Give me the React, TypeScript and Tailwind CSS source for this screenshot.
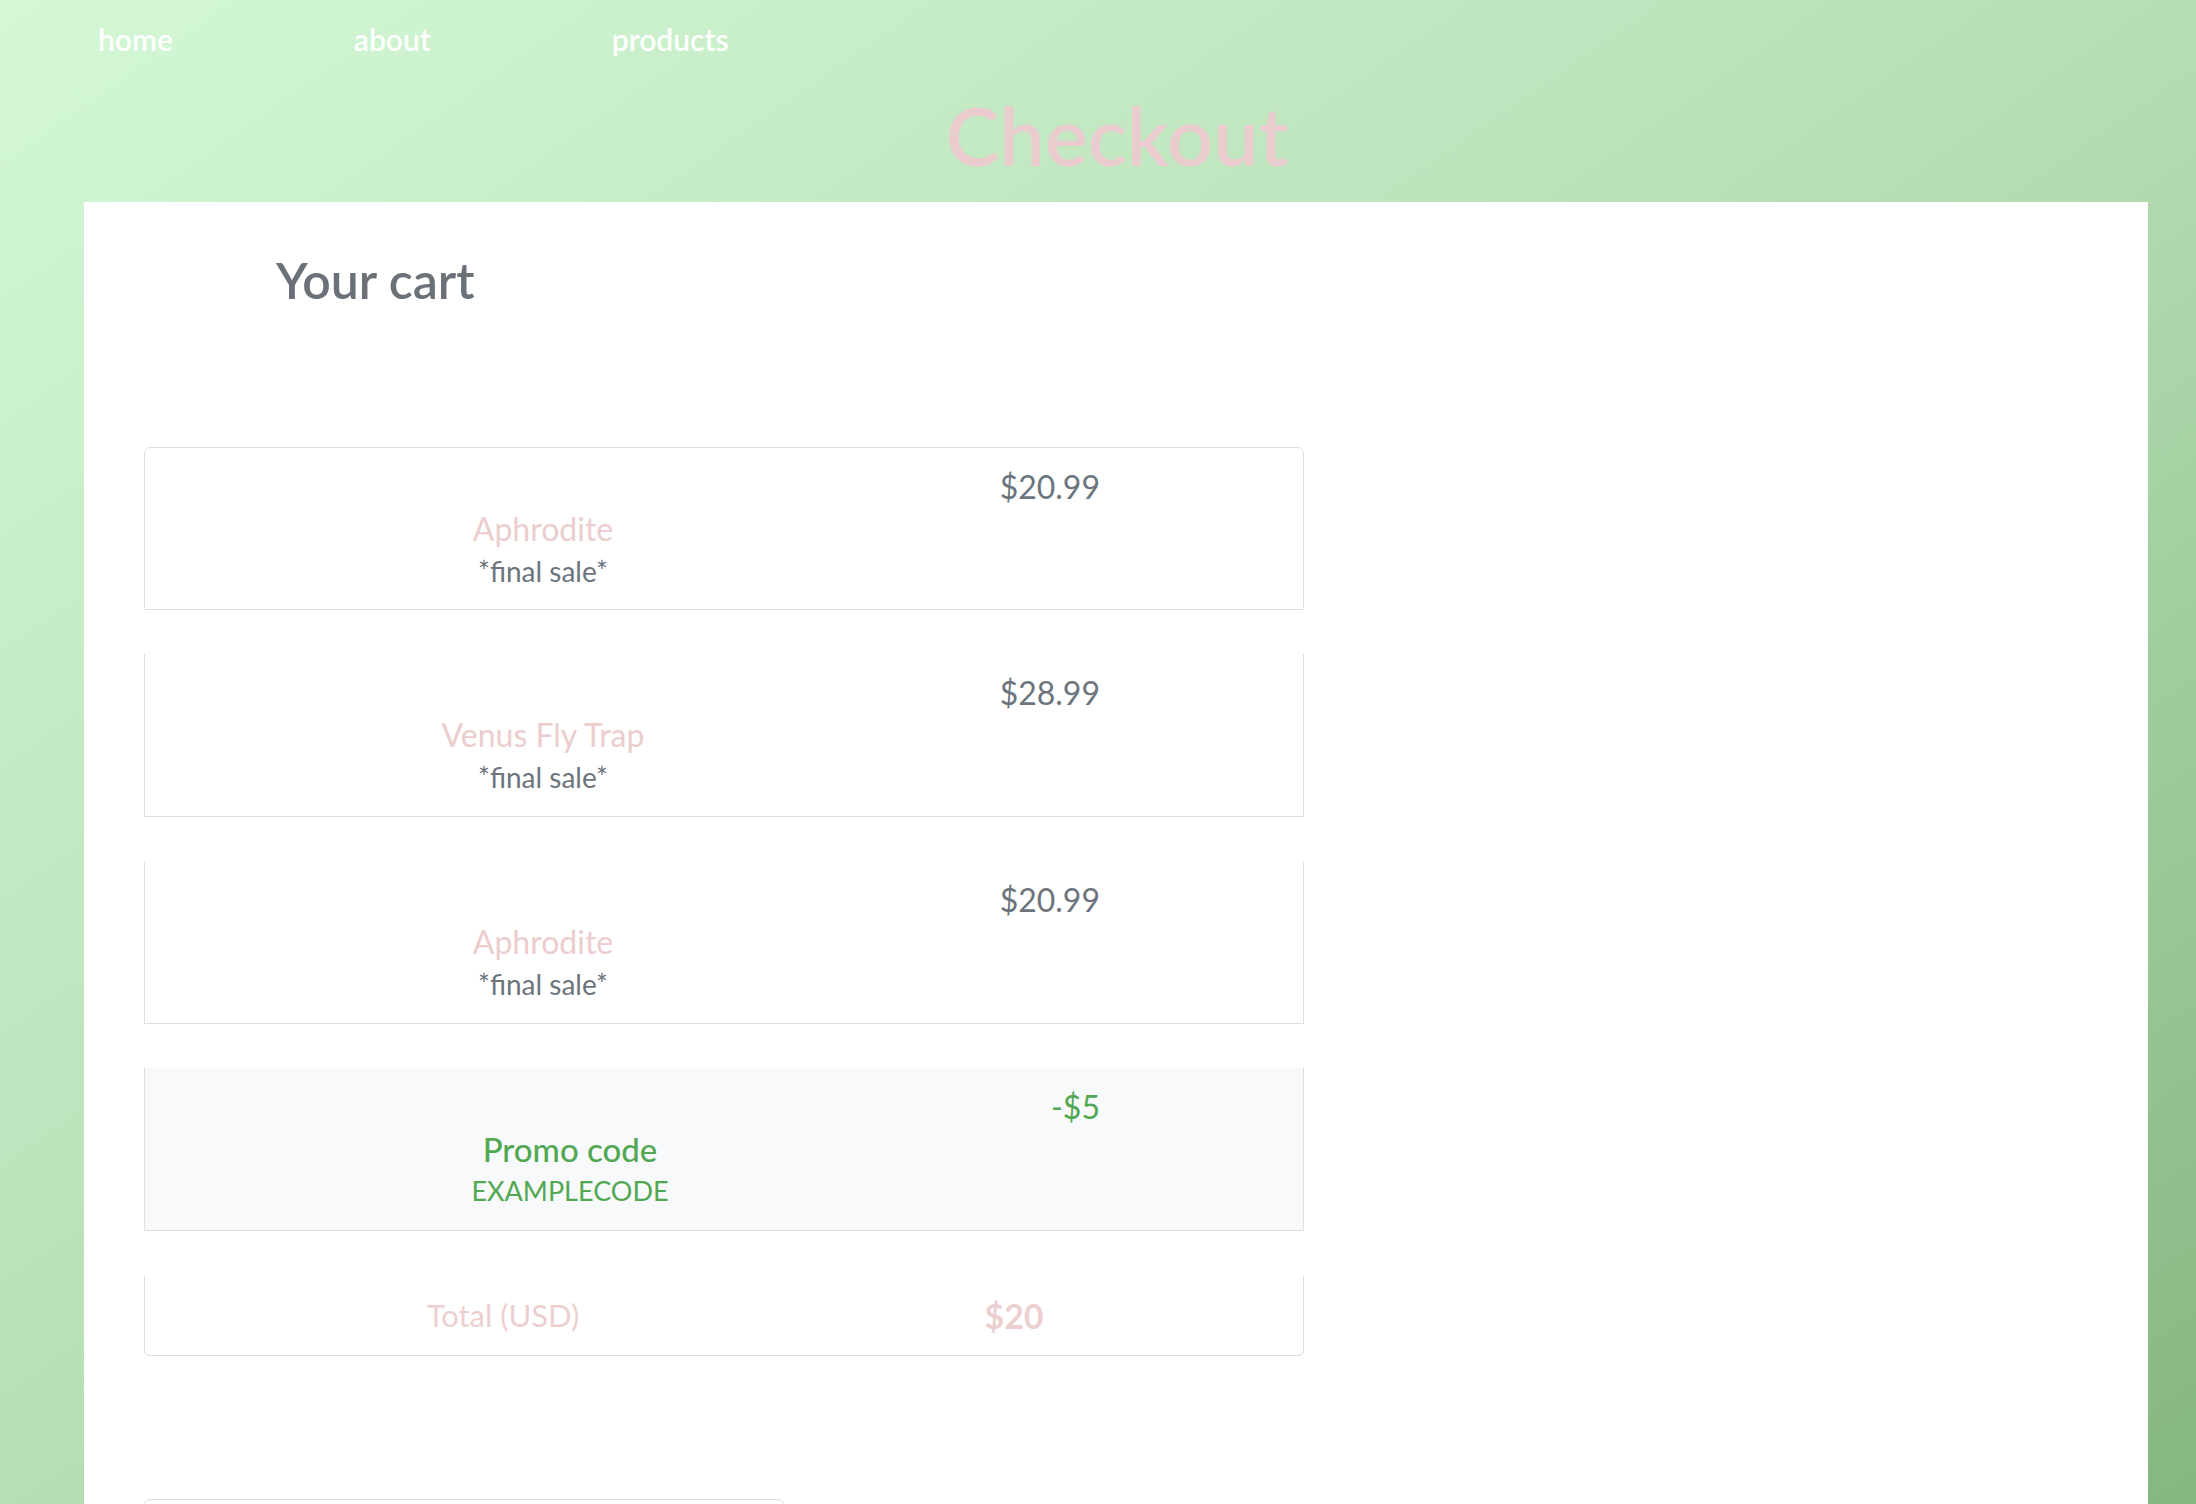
import React from 'react';

interface CartItem {
  name: string;
  price: string;
}

const items: CartItem[] = [
  { name: 'Aphrodite', price: '$20.99' },
  { name: 'Venus Fly Trap', price: '$28.99' },
  { name: 'Aphrodite', price: '$20.99' },
];

const ItemRow: React.FC<{ item: CartItem; first: boolean }> = ({ item, first }) => {
  return (
    <li
      className={
        first
          ? 'flex h-[163px] border border-[#dedede] rounded-t-[6px] pt-[18px] leading-[42px]'
          : 'mt-[44px] flex h-[163px] border-x border-b border-[#dedede] pt-[18px] leading-[42px]'
      }
    >
      <div className="w-[796px] pt-[42px] text-center">
        <h6 className="text-[32px] text-[#ebcdcd]">{item.name}</h6>
        <small className="text-[28px] text-[#6c757d]">*final sale*</small>
      </div>
      <span className="flex-1 pr-[203px] text-right text-[32px] text-[#6c757d]">{item.price}</span>
    </li>
  );
};

const App: React.FC = () => {
  return (
    <div className="min-h-[1504px] overflow-hidden bg-gradient-to-br from-[#d4f8d6] via-[#b6deb4] to-[#84b680] font-['Lato',sans-serif]">
      <nav className="flex gap-[181px] pl-[98px] pt-[18px] text-[30px] font-semibold leading-[42px] text-white">
        <a href="#">home</a>
        <a href="#">about</a>
        <a href="#">products</a>
      </nav>

      <h1 className="pl-[38px] pt-[8px] text-center text-[81px] font-semibold leading-[134px] text-[#eacccf]">
        Checkout
      </h1>

      <main className="ml-[84px] mr-[48px] min-h-[1302px] bg-white px-[60px] pt-[48px]">
        <h2 className="pl-[132px] text-[50px] font-semibold leading-[60px] text-[#6b7179]">Your cart</h2>

        <ul className="mt-[137px] w-[1160px]">
          {items.map((item, i) => (
            <ItemRow key={i} item={item} first={i === 0} />
          ))}
          <li className="mt-[44px] flex h-[163px] border-x border-b border-[#dedede] bg-[#f8f9fa] pt-[18px] leading-[42px] text-[#52a852]">
            <div className="w-[850px] pt-[42px] text-center">
              <h6 className="text-[33px] font-medium">Promo code</h6>
              <small className="text-[27px]">EXAMPLECODE</small>
            </div>
            <span className="flex-1 pr-[203px] text-right text-[32px]">-$5</span>
          </li>
          <li className="mt-[45px] flex h-[80px] items-center rounded-b-[6px] border-x border-b border-[#dedede] text-[#ecd0d0]">
            <span className="w-[716px] text-center text-[31px]">Total (USD)</span>
            <strong className="w-[306px] text-center text-[34px] font-bold">$20</strong>
          </li>
        </ul>

        <div className="mt-[143px] h-[40px] w-[640px] rounded-t-[6px] border border-[#dedede]" />
      </main>
    </div>
  );
};

export default App;
